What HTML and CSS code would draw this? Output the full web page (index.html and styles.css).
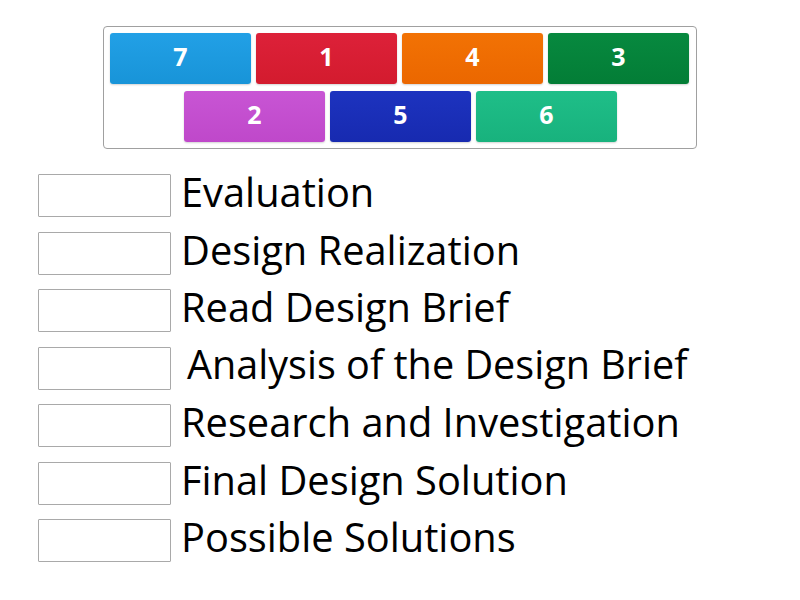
FILE: index.html
```html
<!DOCTYPE html>
<html>
<head>
<meta charset="utf-8">
<link rel="stylesheet" href="styles.css">
</head>
<body>
<div class="page">
  <div class="bank">
    <div class="tile blue">7</div>
    <div class="tile red">1</div>
    <div class="tile orange">4</div>
    <div class="tile green">3</div>
    <div class="tile purple row-start">2</div>
    <div class="tile navy">5</div>
    <div class="tile teal">6</div>
  </div>
  <div class="list">
    <div class="row"><div class="slot"></div><div class="label">Evaluation</div></div>
    <div class="row"><div class="slot"></div><div class="label">Design Realization</div></div>
    <div class="row"><div class="slot"></div><div class="label">Read Design Brief</div></div>
    <div class="row"><div class="slot"></div><div class="label label-wide">Analysis of the Design Brief</div></div>
    <div class="row"><div class="slot"></div><div class="label">Research and Investigation</div></div>
    <div class="row"><div class="slot"></div><div class="label">Final Design Solution</div></div>
    <div class="row"><div class="slot"></div><div class="label">Possible Solutions</div></div>
  </div>
</div>
</body>
</html>
```
FILE: styles.css
```css
html, body {
  margin: 0;
  padding: 0;
  background: #fff;
  font-family: "Open Sans", "Liberation Sans", sans-serif;
}
.page {
  width: 800px;
  height: 600px;
  padding-top: 26px;
  box-sizing: border-box;
}
.bank {
  margin-left: 103px;
  width: 594px;
  box-sizing: border-box;
  border: 1px solid #a0a0a0;
  border-radius: 4px;
  padding: 6px 7px 6px 6px;
  display: flex;
  flex-wrap: wrap;
  justify-content: center;
  column-gap: 5px;
  row-gap: 7px;
}
.tile {
  width: 141px;
  height: 51px;
  box-sizing: border-box;
  padding-bottom: 5px;
  border-radius: 3px;
  color: #fff;
  font-weight: 700;
  font-size: 25px;
  display: flex;
  align-items: center;
  justify-content: center;
  box-shadow: 0 1px 2px rgba(0,0,0,0.18);
}
.row-start { margin-left: 2px; }
.blue   { background: linear-gradient(#22a0e6, #1894d8); }
.red    { background: linear-gradient(#dd2139, #d31b2e); }
.orange { background: linear-gradient(#f27204, #eb6700); }
.green  { background: linear-gradient(#07893f, #037d36); }
.purple { background: linear-gradient(#c855d4, #bf48ca); }
.navy   { background: linear-gradient(#1d33bf, #172ab0); }
.teal   { background: linear-gradient(#1fbe88, #18b27d); }
.list {
  margin-top: 25px;
  margin-left: 38px;
  display: flex;
  flex-direction: column;
  row-gap: 14.5px;
}
.row {
  display: flex;
  align-items: center;
  height: 43px;
}
.slot {
  width: 133px;
  height: 43px;
  box-sizing: border-box;
  border: 1px solid #a9a9a9;
  border-radius: 1px;
  flex: none;
}
.label {
  margin-left: 10px;
  font-size: 39.8px;
  line-height: 43px;
  color: #000;
  white-space: nowrap;
  margin-top: -8px;
}
.label-wide {
  margin-left: 16px;
  font-size: 39.6px;
}
```
